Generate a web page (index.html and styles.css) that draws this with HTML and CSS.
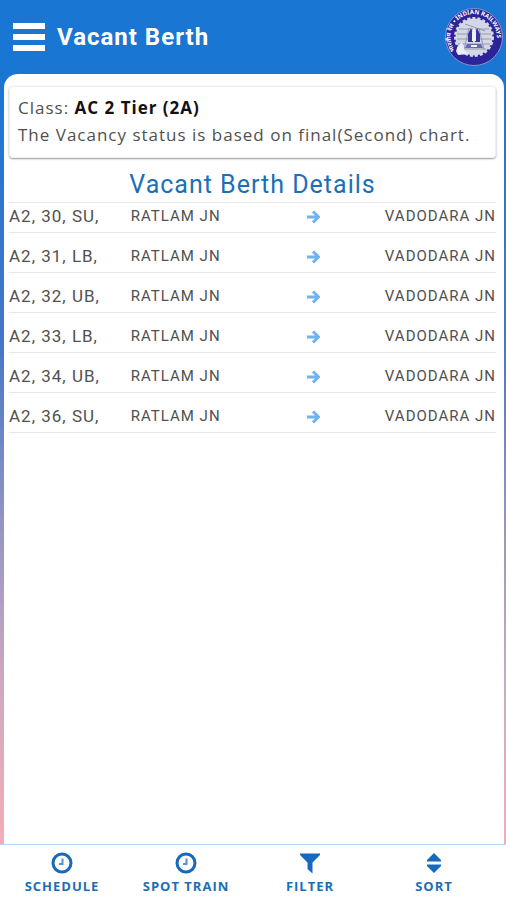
FILE: index.html
```html
<!DOCTYPE html>
<html lang="en">
<head>
<meta charset="utf-8">
<meta name="viewport" content="width=device-width, initial-scale=1">
<title>Vacant Berth</title>
<link rel="stylesheet" href="styles.css">
</head>
<body>
<header class="topbar">
  <button class="menu" type="button" aria-label="Menu"><span class="bar"></span><span class="bar"></span><span class="bar"></span></button>
  <h1 class="title">Vacant Berth</h1>
  <svg class="logo" viewBox="0 0 60 60" role="img" aria-label="Indian Railways">
    <defs><path id="ring" d="M11 43.500A23 23 0 1 1 48 44"/></defs>
    <circle cx="30" cy="30" r="28.500" fill="#2b2499" stroke="#8791cf" stroke-width="1"/>
    <circle cx="30" cy="30" r="18.500" fill="#d5d8e4" stroke="#d5d8e4" stroke-width="3" stroke-dasharray="3 2"/>
    <g fill="none" stroke="#9298b4" stroke-width="1">
      <path d="M15 22h30M13 27h34M13 32h34M14 37h32M18 42h24M21 17l20 7M20 43l5-22M40 43l-5-22"/>
    </g>
    <path d="M24 35v-8l3-6 2 5v9zM31 35v-9l2-5 3 6v8z" fill="#39349a"/>
    <path d="M28 25l2-5 2 5v9h-4z" fill="#f0f1f6"/>
    <path d="M23 37h14l2 4H21z" fill="#666bab"/>
    <path d="M27 38h6v2h-6z" fill="#f0f1f6"/>
    <path d="M13 41l5-6 3 9 4 3-11 1-2-4z" fill="#eceef5"/>
    <text class="seal"><textPath href="#ring">भारतीय रेल • INDIAN RAILWAYS</textPath></text>
  </svg>
</header>
<main class="frame">
  <div class="sheet">
    <section class="notice">
      <p>Class: <strong>AC 2 Tier (2A)</strong></p>
      <p>The Vacancy status is based on final(Second) chart.</p>
    </section>
    <h2 class="heading" id="details">Vacant Berth Details</h2>
    <table class="berths" aria-labelledby="details">
      <tbody>
        <tr><td class="berth">A2, 30, SU,</td><td class="from">RATLAM JN</td><td class="to-arrow"><svg class="arrow" viewBox="0 0 14 14" aria-hidden="true"><path d="M1 7h11M7 1.500L12.500 7L7 12.500"/></svg></td><td class="to">VADODARA JN</td></tr>
        <tr><td class="berth">A2, 31, LB,</td><td class="from">RATLAM JN</td><td class="to-arrow"><svg class="arrow" viewBox="0 0 14 14" aria-hidden="true"><path d="M1 7h11M7 1.500L12.500 7L7 12.500"/></svg></td><td class="to">VADODARA JN</td></tr>
        <tr><td class="berth">A2, 32, UB,</td><td class="from">RATLAM JN</td><td class="to-arrow"><svg class="arrow" viewBox="0 0 14 14" aria-hidden="true"><path d="M1 7h11M7 1.500L12.500 7L7 12.500"/></svg></td><td class="to">VADODARA JN</td></tr>
        <tr><td class="berth">A2, 33, LB,</td><td class="from">RATLAM JN</td><td class="to-arrow"><svg class="arrow" viewBox="0 0 14 14" aria-hidden="true"><path d="M1 7h11M7 1.500L12.500 7L7 12.500"/></svg></td><td class="to">VADODARA JN</td></tr>
        <tr><td class="berth">A2, 34, UB,</td><td class="from">RATLAM JN</td><td class="to-arrow"><svg class="arrow" viewBox="0 0 14 14" aria-hidden="true"><path d="M1 7h11M7 1.500L12.500 7L7 12.500"/></svg></td><td class="to">VADODARA JN</td></tr>
        <tr><td class="berth">A2, 36, SU,</td><td class="from">RATLAM JN</td><td class="to-arrow"><svg class="arrow" viewBox="0 0 14 14" aria-hidden="true"><path d="M1 7h11M7 1.500L12.500 7L7 12.500"/></svg></td><td class="to">VADODARA JN</td></tr>
      </tbody>
    </table>
  </div>
</main>
<nav class="tabs" aria-label="Actions">
  <button class="tab" type="button">
    <svg class="icon" viewBox="0 0 22 22" aria-hidden="true"><circle cx="11" cy="11" r="9" fill="none" stroke="#1669bd" stroke-width="3"/><path d="M11.500 6.500v5.500H8" fill="none" stroke="#4f94d2" stroke-width="2"/></svg>
    SCHEDULE
  </button>
  <button class="tab" type="button">
    <svg class="icon" viewBox="0 0 22 22" aria-hidden="true"><circle cx="11" cy="11" r="9" fill="none" stroke="#1669bd" stroke-width="3"/><path d="M11.500 6.500v5.500H8" fill="none" stroke="#4f94d2" stroke-width="2"/></svg>
    SPOT TRAIN
  </button>
  <button class="tab" type="button">
    <svg class="icon" viewBox="0 0 22 22" aria-hidden="true"><path d="M1 1.500h20v1.500L13.500 10.500v11L8.500 17v-6.500L1 3z" fill="#1669bd"/></svg>
    FILTER
  </button>
  <button class="tab" type="button">
    <svg class="icon" viewBox="0 0 22 22" aria-hidden="true"><path d="M11 1l7 7v1.500H4V8zM4 12.500h14V14l-7 7-7-7z" fill="#1669bd"/></svg>
    SORT
  </button>
</nav>
</body>
</html>
```
FILE: styles.css
```css
* {
  box-sizing: border-box;
}

body {
  display: flex;
  flex-direction: column;
  min-height: 100vh;
  margin: 0;
  background: #fff;
  color: #505050;
  font-family: Roboto, "Liberation Sans", sans-serif;
  letter-spacing: 1px;
}

h1, h2, p {
  margin: 0;
}

button {
  border: 0;
  padding: 0;
  background: none;
  font: inherit;
  letter-spacing: inherit;
}

.topbar {
  display: flex;
  align-items: center;
  gap: 12px;
  height: 74px;
  padding: 0 2px 0 13px;
  background: #1976d2;
  color: #fff;
}

.menu {
  display: flex;
  flex-direction: column;
  gap: 5px;
  width: 32px;
}

.bar {
  height: 6px;
  background: #fff;
}

.title {
  flex: 1;
  font-size: 24px;
  font-weight: 700;
}

.logo {
  width: 60px;
  height: 60px;
}

.seal {
  fill: #fff;
  font: 700 6px "Noto Sans", sans-serif;
  letter-spacing: 0;
}

.frame {
  display: flex;
  flex: 1;
  padding: 0 2px 0 4px;
  background: linear-gradient(#1976d2, #4676c6 35%, #9997c4 60%, #d0a9bf 80%, #f5acb7);
}

.sheet {
  flex: 1;
  padding: 12px 8px 0 5px;
  border-radius: 14px 14px 0 0;
  background: #fff;
}

.notice {
  padding: 7px 8px 9px;
  border: 1px solid #eee;
  border-radius: 4px;
  box-shadow: 0 1px 2px #999;
  font: 17px/27px "Open Sans", sans-serif;
}

.notice strong {
  color: #111;
}

.heading {
  padding-top: 10px;
  color: #1a70b8;
  font-size: 25px;
  font-weight: 400;
  line-height: 34px;
  text-align: center;
}

.berths {
  width: 100%;
  border-collapse: collapse;
  border-top: 1px solid #e8e8e8;
  table-layout: fixed;
}

.berths td {
  height: 40px;
  padding: 6px 0 0;
  border-bottom: 1px solid #e8e8e8;
  font-size: 15px;
  line-height: 20px;
  white-space: nowrap;
}

.berths tr:first-child td {
  height: 30px;
  padding: 0 0 3px;
}

.berths .berth {
  width: 25%;
  font-size: 17px;
}

.berths .to-arrow {
  text-align: center;
}

.berths .to {
  text-align: right;
}

.arrow {
  display: inline-block;
  width: 14px;
  height: 14px;
  fill: none;
  stroke: #70b1f1;
  stroke-width: 3;
  vertical-align: middle;
}

.tabs {
  display: grid;
  grid-template-columns: repeat(4, 1fr);
  padding: 7px 10px 4px 0;
  border-top: 1px solid #b9d4f1;
}

.tab {
  display: flex;
  flex-direction: column;
  align-items: center;
  gap: 2px;
  color: #1b6eb5;
  font: 700 13px/20px "Open Sans", sans-serif;
}

.icon {
  width: 22px;
  height: 22px;
}
```
